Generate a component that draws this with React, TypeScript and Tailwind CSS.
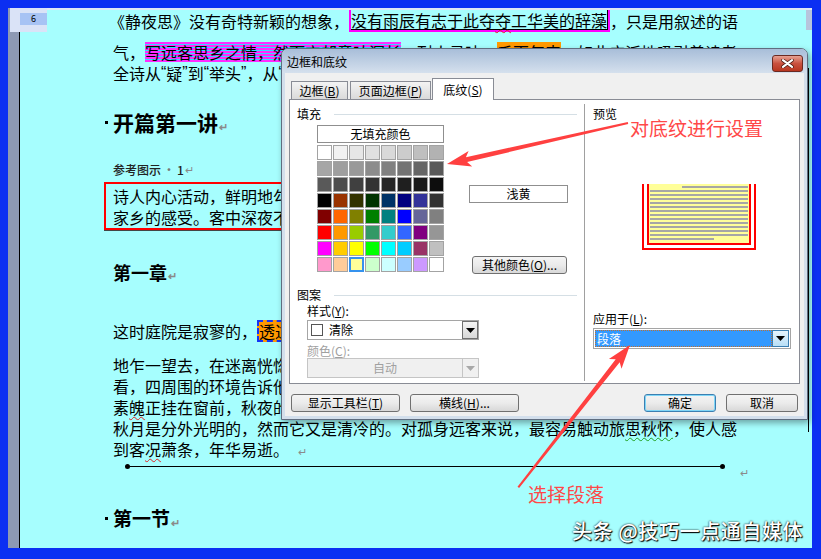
const swatches = [
  ['#ffffff', '#f2f2f2', '#e6e6e6', '#e0e0e0', '#d9d9d9', '#cccccc', '#bfbfbf', '#b2b2b2'],
  ['#a6a6a6', '#9f9f9f', '#999999', '#8c8c8c', '#808080', '#737373', '#666666', '#595959'],
  ['#595959', '#4d4d4d', '#404040', '#333333', '#262626', '#1f1f1f', '#1a1a1a', '#0d0d0d'],
  ['#000000', '#993300', '#333300', '#003300', '#003366', '#000080', '#333399', '#333333'],
  ['#800000', '#ff6600', '#808000', '#008000', '#008080', '#0000ff', '#666699', '#808080'],
  ['#ff0000', '#ff9900', '#99cc00', '#339966', '#33cccc', '#3366ff', '#800080', '#969696'],
  ['#ff00ff', '#ffcc00', '#ffff00', '#00ff00', '#00ffff', '#00ccff', '#993366', '#c0c0c0'],
  ['#ff99cc', '#ffcc99', '#ffff99', '#ccffcc', '#ccffff', '#99ccff', '#cc99ff', '#ffffff'],
];

function Arrow({ color = '#000' }: { color?: string }) {
  return (
    <svg width="9" height="5" viewBox="0 0 9 5">
      <path d="M0 0h9L4.5 5z" fill={color} />
    </svg>
  );
}

function Ret() {
  return <span className="text-[11px] text-[#8a8a8a] ml-[1px] self-end leading-[16px]">↵</span>;
}

// narrow western quotes, as the doc renders them
function Q({ children }: { children: React.ReactNode }) {
  return <span className="font-['Liberation_Sans',sans-serif]">{children}</span>;
}

function Btn({ children, w, primary }: { children: React.ReactNode; w: string; primary?: boolean }) {
  return (
    <div
      className={`${w} h-[18px] rounded-[3px] border flex items-center justify-center text-[12px] leading-none bg-gradient-to-b from-[#f4f4f4] via-[#ebebeb] to-[#d8d8d8] ${
        primary ? 'border-[#3c7fb1] shadow-[inset_0_0_0_1px_#7fd6f7]' : 'border-[#707070]'
      }`}
    >
      {children}
    </div>
  );
}

function Dialog() {
  return (
    <div className="absolute left-[281px] top-[48px] w-[527px] h-[372px] rounded-t-[7px] border border-[#5f6d80] bg-[#d3dfec] flex flex-col shadow-[2px_3px_6px_rgba(0,0,0,0.35)] text-[12px] text-black">
      <div className="h-[24px] rounded-t-[6px] bg-gradient-to-b from-[#a8bed9] to-[#d5e0ed] flex items-center justify-between pl-[5px] pr-[4px]">
        <span className="text-[12px] mt-[2px]">边框和底纹</span>
        <div className="w-[31px] h-[17px] mt-[4px] rounded-[3px] border border-[#6b2a22] bg-gradient-to-b from-[#e6a193] via-[#c9513f] to-[#b8361f] flex items-center justify-center">
          <svg width="13" height="9" viewBox="0 0 13 9">
            <path d="M2 1.2l9 6.6M11 1.2l-9 6.6" stroke="#4a1a12" strokeWidth="3.6" strokeLinecap="round" />
            <path d="M2 1.2l9 6.6M11 1.2l-9 6.6" stroke="#fff" strokeWidth="2.2" strokeLinecap="round" />
          </svg>
        </div>
      </div>
      <div className="flex-1 mx-[3px] mb-[3px] bg-[#f0f0f0] flex flex-col px-[4px] pt-[5px]">
        <div className="flex items-end h-[21px] relative z-10">
          <div className="ml-[2px] w-[57px] h-[18px] border border-b-0 border-[#898c95] bg-gradient-to-b from-[#f3f3f3] to-[#dadada] flex items-center justify-center">
            边框(<u>B</u>)
          </div>
          <div className="ml-[2px] w-[81px] h-[18px] border border-b-0 border-[#898c95] bg-gradient-to-b from-[#f3f3f3] to-[#dadada] flex items-center justify-center">
            页面边框(<u>P</u>)
          </div>
          <div className="ml-[1px] w-[62px] h-[22px] -mb-[1px] border border-b-0 border-[#898c95] bg-white flex items-center justify-center">
            底纹(<u>S</u>)
          </div>
        </div>
        <div className="h-[285px] border border-[#898c95] bg-white flex">
          <div className="w-[294px] flex flex-col pl-[7px]">
            <div className="mt-[7px] h-[14px] flex items-center">
              <span>填充</span>
              <div className="flex-1 h-[1px] bg-[#d5dfe5] ml-[13px] mr-[7px]" />
            </div>
            <div className="ml-[20px] mt-[4px] w-[127px] h-[18px] border border-[#8f8f8f] bg-white flex items-center justify-center">
              无填充颜色
            </div>
            <div className="mt-[2px] flex">
              <div className="ml-[20px] grid grid-cols-[repeat(8,15px)] auto-rows-[15px] gap-[1px]">
                {swatches.flat().map((c, i) => (
                  <div
                    key={i}
                    className={i === 58 ? 'border-2 border-[#3592ee]' : 'border border-[#a3a3a3]'}
                    style={{ backgroundColor: c }}
                  />
                ))}
              </div>
              <div className="ml-[25px] flex flex-col">
                <div className="mt-[40px] w-[99px] h-[18px] border border-[#8f8f8f] bg-white flex items-center justify-center">
                  浅黄
                </div>
                <div className="mt-[53px] ml-[3px]">
                  <Btn w="w-[95px]">
                    其他颜色(<u>O</u>)...
                  </Btn>
                </div>
              </div>
            </div>
            <div className="mt-[14px] h-[14px] flex items-center">
              <span>图案</span>
              <div className="flex-1 h-[1px] bg-[#d5dfe5] ml-[13px] mr-[7px]" />
            </div>
            <div className="ml-[10px] mt-[3px] h-[12px] leading-[12px]">
              样式(<u>Y</u>):
            </div>
            <div className="ml-[10px] mt-[3px] w-[172px] h-[20px] border border-[#a5a5a5] bg-white flex items-center">
              <div className="ml-[3px] w-[12px] h-[12px] border border-[#555]" />
              <span className="ml-[6px]">清除</span>
              <div className="ml-auto w-[16px] h-[18px] border border-[#707070] bg-gradient-to-b from-[#f4f4f4] to-[#d8d8d8] flex items-center justify-center">
                <Arrow />
              </div>
            </div>
            <div className="ml-[10px] mt-[5px] h-[12px] leading-[12px] text-[#a0a0a0]">
              颜色(<u>C</u>):
            </div>
            <div className="ml-[10px] mt-[1px] w-[172px] h-[20px] border border-[#c5c5c5] bg-[#f0f0f0] flex items-center">
              <span className="flex-1 text-center text-[#a0a0a0]">自动</span>
              <div className="w-[16px] h-full border-l border-[#c5c5c5] flex items-center justify-center">
                <Arrow color="#a8a8a8" />
              </div>
            </div>
          </div>
          <div className="flex-1 mt-[4px] mb-[2px] border-l border-[#a0a0a0] flex flex-col">
            <div className="mt-[4px] pl-[8px] h-[12px] leading-[12px]">预览</div>
            <div className="mt-[64px] ml-[57px] w-[114px] h-[66px] border-x-2 border-b-2 border-[#ff0000] px-[3px] pb-[3px] bg-white">
              <div className="h-full border-x-2 border-b-2 border-[#ff0000] bg-[#ffff99] flex flex-col gap-[2px] pt-[2px] px-[1px]">
                {Array.from({ length: 14 }).map((_, i) => (
                  <div
                    key={i}
                    className={`h-[2px] bg-[#a6a6a6] ${i === 0 ? 'ml-[32px]' : ''} ${i === 13 ? 'w-[64px]' : ''}`}
                  />
                ))}
              </div>
            </div>
            <div className="mt-[63px] pl-[8px] h-[12px] leading-[12px]">
              应用于(<u>L</u>):
            </div>
            <div className="mt-[3px] ml-[8px] w-[198px] h-[21px] border border-[#a5a5a5] bg-white p-[1px] flex">
              <div className="flex-1 bg-[#3399ff] outline-1 outline-dotted outline-[#c07030] -outline-offset-1 flex items-center pl-[2px] text-white">
                段落
              </div>
              <div className="w-[17px] border border-[#3c7fb1] bg-gradient-to-b from-[#e5f4fc] to-[#b9dff6] flex items-center justify-center">
                <Arrow />
              </div>
            </div>
          </div>
        </div>
        <div className="mt-[10px] flex items-center">
          <div className="ml-[2px]">
            <Btn w="w-[109px]">
              显示工具栏(<u>T</u>)
            </Btn>
          </div>
          <div className="ml-[10px]">
            <Btn w="w-[109px]">
              横线(<u>H</u>)...
            </Btn>
          </div>
          <div className="ml-auto">
            <Btn w="w-[72px]" primary>
              确定
            </Btn>
          </div>
          <div className="ml-[10px] mr-[2px]">
            <Btn w="w-[72px]">取消</Btn>
          </div>
        </div>
      </div>
    </div>
  );
}

function Document() {
  const line = 'h-[21px] flex items-center whitespace-nowrap';
  return (
    <div className="flex-1 flex flex-col pl-[93px] text-[16px] leading-[20px] text-black overflow-hidden">
      <div className="h-[22px] -ml-[4px] flex items-center whitespace-nowrap">
        <span>《静夜思》没有奇特新颖的想象，</span>
        <span className="h-[22px] border-x-2 border-b-2 border-[#ff00ff] flex">
          <span className="flex items-center border-b border-r border-black leading-[18px]">
            没有雨辰有志于此夺
            <span className="underline decoration-wavy decoration-[#e02020] decoration-1 underline-offset-2">夺</span>
            工华美的辞藻
          </span>
        </span>
        <span>，只是用叙述的语</span>
      </div>
      <div className={`${line} mt-[9px] h-[20px]`}>
        <span>气，</span>
        <span className="bg-[repeating-linear-gradient(to_bottom,#ff2cff_0px,#ff2cff_2px,#38d8ff_2px,#38d8ff_3px)]">
          写远客思乡之情，然而它却意味深长
        </span>
        <span>，耐人寻味，</span>
        <span className="bg-[#ff9900]">千百年来</span>
        <span>，如此广泛地吸引着读者。</span>
      </div>
      <div className={line}>
        全诗从<Q>“</Q>疑<Q>”</Q>到<Q>“</Q>举头<Q>”</Q>，从<Q>“</Q>举头<Q>”</Q>到<Q>“</Q>低头<Q>”</Q>，形象地揭示了诗人
      </div>

      <div className="mt-[27px] h-[24px] flex items-center whitespace-nowrap text-[21px] font-bold">
        <span className="-ml-[8px] mr-[5px] w-[3px] h-[3px] bg-black" />
        开篇第一讲
        <Ret />
      </div>

      <div className="mt-[29px] h-[14px] flex items-center text-[12px] font-medium text-[#222] whitespace-nowrap">
        参考图示<span className="mx-[2px] text-[#777]">·</span>1<Ret />
      </div>

      <div className="mt-[5px] -ml-[9px] w-[650px] h-[48px] border-2 border-[#ff0000] shadow-[0_1px_0_#444] pl-[7px] pt-[1px]">
        <div className={line}>诗人内心活动，鲜明地勾勒出一幅生动形象的月夜思乡图，表现了诗人思念</div>
        <div className={line}>家乡的感受。客中深夜不能成眠、短梦初回的情景。</div>
      </div>

      <div className="mt-[31px] h-[22px] flex items-center text-[18px] font-bold whitespace-nowrap">
        第一章
        <Ret />
      </div>

      <div className="mt-[37px] h-[22px] flex items-center whitespace-nowrap">
        <span>这时庭院是寂寥的，</span>
        <span className="h-[22px] flex items-center bg-[#ff9900] border-2 border-dashed border-[#1536f5] leading-[18px]">
          透过窗户映照到床前的月光显得格外明亮
        </span>
        <span>。</span>
      </div>
      <div className={`${line} mt-[12px]`}>地乍一望去，在迷离恍惚中，真好像是地上铺了一层白皑皑的浓霜；可是再定神一</div>
      <div className={line}>看，四周围的环境告诉他，这不是霜痕而是月色。月色不免吸引着他抬头一看，一轮娟娟</div>
      <div className={line}>
        素<span className="underline decoration-wavy decoration-[#e02020] decoration-1 underline-offset-2">魄</span>
        正挂在窗前，秋夜的太空是如此的明净！这时，他完全清醒了。
      </div>
      <div className={line}>
        秋月是分外光明的，然而它又是清冷的。对孤身远客来说，最容易触动旅
        <span className="underline decoration-wavy decoration-[#20a020] decoration-1 underline-offset-2">思秋怀</span>
        ，使人感
      </div>
      <div className={line}>
        到客<span className="underline decoration-wavy decoration-[#e02020] decoration-1 underline-offset-2">况</span>
        萧条，年华易逝。
        <span className="ml-[8px]">
          <Ret />
        </span>
      </div>

      <div className="h-[14px] flex items-center pl-[12px]">
        <span className="w-[5px] h-[5px] rounded-full bg-black" />
        <span className="w-[590px] h-[1px] bg-black" />
        <span className="w-[5px] h-[5px] rounded-full bg-black" />
        <span className="ml-[14px] mt-[8px]">
          <Ret />
        </span>
      </div>

      <div className="mt-[33px] h-[24px] flex items-center whitespace-nowrap text-[19px] font-bold">
        <span className="-ml-[8px] mr-[5px] w-[3px] h-[3px] bg-black" />
        第一节
        <Ret />
      </div>
    </div>
  );
}

export default function App() {
  return (
    <div className="relative w-[821px] h-[559px] overflow-hidden bg-[#0b2ff2] pt-[8px] pl-[8px] pr-[9px] pb-[11px] font-['Noto_Sans_CJK_SC',sans-serif]">
      <div className="flex h-full">
        <div className="w-[11px] bg-[#8d99b4]" />
        <div className="w-[1px] bg-black" />
        <div className="flex-1 flex flex-col bg-[#a6fefe]">
          <div className="h-[2px] bg-[#dfe8f5]" />
          <div className="flex-1 flex">
            <Document />
            <div className="w-[6px] flex flex-col">
              <div className="h-[20px] bg-[#b7c4dc]" />
              <div className="ml-[2px] mt-[38px] w-[1px] h-[364px] bg-black" />
            </div>
          </div>
        </div>
      </div>

      {/* page number tag in the margin */}
      <div className="absolute left-[10px] top-[8px] w-[37px] h-[24px] bg-[#dae3f7] flex justify-end pt-[5px]">
        <div className="w-[27px] h-[12px] bg-[#a7c3f4] text-[9px] leading-[12px] text-center">6</div>
      </div>

      <Dialog />

      {/* annotations */}
      <svg className="absolute left-0 top-0 pointer-events-none" width="821" height="559" viewBox="0 0 821 559">
        <polygon
          points="447,164 468.6,150.9 465.9,157.2 627.8,122 628.2,124 467.1,162 472.2,166.5"
          fill="#ff4040"
        />
        <polygon
          points="630,345 621.5,368.8 619.7,362.2 519.1,487.9 517.5,486.7 615.7,359.2 608.9,359"
          fill="#ff4040"
        />
      </svg>
      <div className="absolute left-[630px] top-[117px] text-[19px] leading-[22px] text-[#ff4848]">对底纹进行设置</div>
      <div className="absolute left-[528px] top-[483px] text-[19px] leading-[22px] text-[#ff4848]">选择段落</div>
      <div className="absolute left-[572px] top-[518px] text-[20px] leading-[26px] tracking-[0.6px] font-medium text-white [text-shadow:1px_1px_1px_#000,0_0_2px_#000]">
        头条 @技巧一点通自媒体
      </div>
    </div>
  );
}
